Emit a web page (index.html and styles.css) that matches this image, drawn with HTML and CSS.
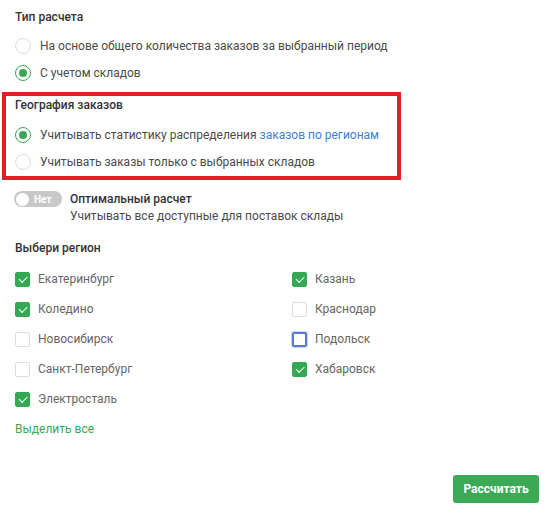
FILE: index.html
```html
<!DOCTYPE html>
<html lang="ru">
<head>
<meta charset="utf-8">
<link rel="stylesheet" href="styles.css">
</head>
<body>
<div class="page">
  <div class="section">
    <div class="title">Тип расчета</div>
    <label class="radio-row"><span class="radio"></span><span>На основе общего количества заказов за выбранный период</span></label>
    <label class="radio-row"><span class="radio checked"></span><span>С учетом складов</span></label>
  </div>
  <div class="highlight">
    <div class="title">География заказов</div>
    <label class="radio-row"><span class="radio checked"></span><span>Учитывать статистику распределения <a class="link">заказов по регионам</a></span></label>
    <label class="radio-row"><span class="radio"></span><span>Учитывать заказы только с выбранных складов</span></label>
  </div>
  <div class="toggle-row">
    <div class="toggle"><span class="knob"></span><span class="toggle-text">Нет</span></div>
    <div class="toggle-info">
      <div class="toggle-title">Оптимальный расчет</div>
      <div class="toggle-sub">Учитывать все доступные для поставок склады</div>
    </div>
  </div>
  <div class="title region-title">Выбери регион</div>
  <div class="grid">
    <label class="check-row"><span class="box on"></span><span>Екатеринбург</span></label>
    <label class="check-row"><span class="box on"></span><span>Казань</span></label>
    <label class="check-row"><span class="box on"></span><span>Коледино</span></label>
    <label class="check-row"><span class="box"></span><span>Краснодар</span></label>
    <label class="check-row"><span class="box"></span><span>Новосибирск</span></label>
    <label class="check-row"><span class="box focus"></span><span>Подольск</span></label>
    <label class="check-row"><span class="box"></span><span>Санкт-Петербург</span></label>
    <label class="check-row"><span class="box on"></span><span>Хабаровск</span></label>
    <label class="check-row"><span class="box on"></span><span>Электросталь</span></label>
  </div>
  <div class="select-all">Выделить все</div>
  <div class="actions">
    <button class="btn">Рассчитать</button>
  </div>
</div>
</body>
</html>
```
FILE: styles.css
```css
* { box-sizing: border-box; }
body {
  margin: 0;
  background: #fff;
  font-family: Roboto, "Liberation Sans", sans-serif;
  font-size: 12px;
  color: #555;
}
.page { padding: 7px 0 0 15px; width: 557px; }
.title {
  height: 20px;
  line-height: 20px;
  font-weight: 500;
  color: #333;
}
.section { padding-bottom: 5px; }
.radio-row {
  display: flex;
  align-items: center;
  height: 27px;
  white-space: nowrap;
  color: #4a4a4a;
}
.section .title { margin-bottom: 5.5px; }
.radio {
  width: 16px;
  height: 16px;
  border-radius: 50%;
  border: 1px solid #ddd;
  margin-right: 9px;
  flex: none;
  display: flex;
  align-items: center;
  justify-content: center;
}
.radio.checked { border-color: #3aa757; }
.radio.checked::after {
  content: "";
  width: 8px;
  height: 8px;
  border-radius: 50%;
  background: #3aa757;
}
.link { color: #3b7fd4; text-decoration: none; }
.highlight {
  margin-left: -13px;
  width: 399px;
  border: 4px solid #e41e26;
  padding: 0 0 0 9px;
}
.highlight .title { margin-top: -1px; margin-bottom: 6.5px; }
.highlight .radio-row:last-child { margin-bottom: 1px; }
.toggle-row {
  display: flex;
  margin-top: 10px;
}
.toggle {
  width: 48px;
  height: 16px;
  border-radius: 8px;
  background: #c8c8c8;
  display: flex;
  align-items: center;
  padding: 0 2px;
  margin-left: -1px;
  margin-top: 1px;
  flex: none;
}
.knob {
  width: 13px;
  height: 13px;
  border-radius: 50%;
  background: #fff;
}
.toggle-text {
  color: #fff;
  font-size: 10px;
  font-weight: 700;
  margin-left: 5px;
}
.toggle-info { margin-left: 8px; }
.toggle-title {
  font-weight: 500;
  color: #333;
  line-height: 18px;
}
.toggle-sub { line-height: 17px; color: #4a4a4a; }
.region-title { margin-top: 13px; }
.grid {
  display: grid;
  grid-template-columns: 277px 1fr;
  grid-auto-rows: 30px;
  margin-top: 6px;
  color: #666;
}
.check-row {
  display: flex;
  align-items: center;
}
.box {
  width: 15px;
  height: 15px;
  border: 1px solid #ddd;
  border-radius: 2px;
  margin-right: 8px;
  flex: none;
  position: relative;
}
.box.on { background: #34a853; border-color: #34a853; }
.box.on::after {
  content: "";
  position: absolute;
  left: 3px;
  top: 3px;
  width: 7px;
  height: 3.5px;
  border-left: 1.5px solid #fff;
  border-bottom: 1.5px solid #fff;
  transform: rotate(-45deg);
}
.box.focus {
  border: 2px solid #5a7ac9;
  box-shadow: 0 0 0 1px #c8d6f0;
}
.select-all {
  color: #3aa757;
  height: 20px;
  line-height: 20px;
  margin-top: 5px;
}
.actions {
  display: flex;
  justify-content: flex-end;
  padding-right: 18px;
  margin-top: 36px;
}
.btn {
  width: 86px;
  height: 28px;
  border: none;
  border-radius: 3px;
  background: #3aaa57;
  color: #fff;
  font-family: Roboto, "Liberation Sans", sans-serif;
  font-size: 12px;
  font-weight: 700;
  padding: 0;
}
```
